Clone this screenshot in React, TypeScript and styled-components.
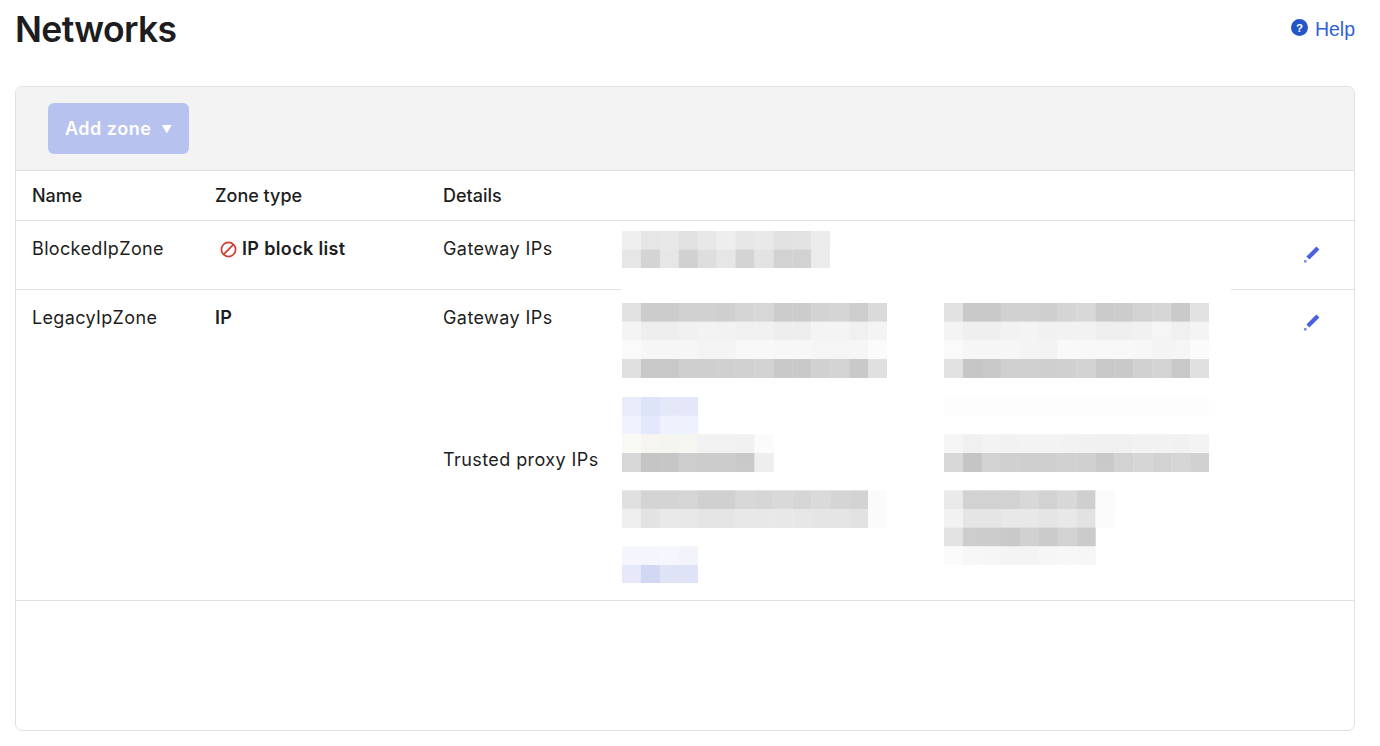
import React from "react";
import styled, { createGlobalStyle } from "styled-components";

const Global = createGlobalStyle`
  html, body { margin: 0; padding: 0; background: #fff; }
  body { font-family: Inter, "Liberation Sans", sans-serif; color: #1d1d21; }
`;

const Page = styled.div`
  width: 1380px;
  height: 746px;
  box-sizing: border-box;
  padding: 0 25px 0 15px;
  overflow: hidden;
`;

const TopBar = styled.header`
  display: flex;
  justify-content: space-between;
  align-items: center;
  height: 58px;
  margin-bottom: 28px;
`;

const Title = styled.h1`
  margin: 1px 0 0;
  font-size: 35.5px;
  line-height: 58px;
  font-weight: 600;
  letter-spacing: -0.62px;
  color: #1d1d21;
`;

const HelpLink = styled.a`
  display: flex;
  align-items: center;
  gap: 6.5px;
  font-size: 19.5px;
  color: #2f62d9;
  font-family: "Liberation Sans", Arial, sans-serif;
`;

const HelpIcon = styled.svg`
  display: block;
  margin-top: -4px;
`;

const Card = styled.section`
  box-sizing: border-box;
  height: 645px;
  border: 1px solid #e1e1e1;
  border-radius: 7px;
  overflow: hidden;
`;

const Toolbar = styled.div`
  box-sizing: border-box;
  height: 84px;
  padding: 16px 32px;
  background: #f3f3f3;
  border-bottom: 1px solid #e1e1e1;
`;

const AddButton = styled.button`
  display: flex;
  align-items: center;
  gap: 10px;
  box-sizing: border-box;
  width: 141px;
  height: 51px;
  padding: 0 0 0 17px;
  border: 0;
  border-radius: 6px;
  background: #b8c2ee;
  color: #fff;
  font-family: inherit;
  font-size: 18px;
  font-weight: 600;
  letter-spacing: 0.5px;
`;

const Caret = styled.span`
  margin-top: 3px;
  font-size: 10.5px;
  line-height: 1;
  letter-spacing: 0;
`;

const Row = styled.div<{ $height: number; $head?: boolean }>`
  position: relative;
  box-sizing: border-box;
  display: grid;
  grid-template-columns: 199px 228px 1fr 50px;
  height: ${(p) => p.$height}px;
  border-bottom: 1px solid #e1e1e1;
  font-size: 18px;
  line-height: 22px;
  font-weight: ${(p) => (p.$head ? 500 : 400)};
  letter-spacing: ${(p) => (p.$head ? 0 : 0.35)}px;
`;

const Veil = styled.div`
  position: absolute;
  left: 605px;
  top: -2px;
  width: 610px;
  height: 5px;
  background: #fff;
`;

const Cell = styled.div<{ $pad?: number; $strong?: boolean }>`
  padding-top: ${(p) => p.$pad ?? 17}px;
  padding-left: 0;
  font-weight: ${(p) => (p.$strong ? 600 : "inherit")};
`;

const NameCell = styled(Cell)`
  padding-left: 16px;
`;

const ZoneLabel = styled.span`
  display: flex;
  align-items: center;
  gap: 5px;
  margin-left: 5px;
`;

const Details = styled.div<{ $top: number }>`
  display: flex;
  flex-direction: column;
  gap: 19px;
  padding-top: ${(p) => p.$top}px;
`;

const DetailGroup = styled.div`
  display: grid;
  grid-template-columns: 179px 322px 265px;
  align-items: start;
`;

const GroupLabel = styled.div<{ $top: number }>`
  padding-top: ${(p) => p.$top}px;
  letter-spacing: 0.42px;
`;

const EditCell = styled.div<{ $top: number }>`
  padding-top: ${(p) => p.$top}px;
  margin-left: -1px;
`;

const MosaicSvg = styled.svg`
  display: block;
`;

const CELL_W = 18.93;
const CELL_H = 18.67;

const colour = (t: string) => (t.length === 2 ? `#${t}${t}${t}` : `#${t}`);

function Mosaic({ rows }: { rows: string[] }) {
  const cols = Math.max(...rows.map((r) => (r ? r.split(" ").length : 0)));
  const w = cols * CELL_W;
  const h = rows.length * CELL_H;
  return (
    <MosaicSvg width={w} height={h} viewBox={`0 0 ${w} ${h}`} aria-hidden="true">
      {rows.map((r, y) =>
        r
          ? r.split(" ").map((t, x) => (
              <rect key={`${x}-${y}`} x={x * CELL_W} y={y * CELL_H} width={CELL_W + 0.3} height={CELL_H + 0.3} fill={colour(t)} />
            ))
          : null
      )}
    </MosaicSvg>
  );
}

const blocked = [
  "ef e6 e8 e1 e8 ee e6 e9 e1 e3 ec",
  "e6 d4 e6 d1 de e6 d4 e3 d2 d2 eb",
];
const gatewayA = [
  "e1 cc cc d1 d1 cf d5 d7 cc cc d3 d5 cd da",
  "f4 ee ee f1 f3 f2 f0 f1 ee ee f4 f4 f0 f4",
  "fa f6 f6 f6 f4 f4 f8 f8 f7 f7 f5 f5 f6 fb",
  "e0 c8 c8 cf cf d0 d1 d3 c9 c9 d1 d4 c9 e0",
];
const gatewayB = [
  "e2 c9 c9 d1 d1 cf d5 d8 cb cc d2 d6 ca e2",
  "f4 ef ef f2 f4 f1 f2 f2 ef ef f1 f5 f0 f4",
  "fa f6 f6 f6 f4 f3 f9 f8 f8 f8 f7 f4 f5 fb",
  "e1 c6 c8 d0 d0 cf d0 d3 c8 c9 d1 d4 c8 e0",
];
const proxyA = [
  "e9ecfb dde3f9 e4e8f9 e4e7f8",
  "f0f3fe e4e8fc eff2fd eef1fe",
  "f9f9f6 f6f5f0 f5f5f0 f5f6f1 f2 f2 f1 fb",
  "d7 c5 c6 cd cc cc c9 ee",
  "",
  "e0 d4 d4 d6 d0 d0 d7 d6 d9 d6 da d5 d3 fb",
  "ef e3 e9 e8 e5 e5 e8 e8 e8 e7 e5 e5 e2 fb",
  "",
  "f5f6fd f5f6fd f6f7fd f3f4fb",
  "e5e9fa d2d8f4 dfe3f6 e0e3f7",
];
const proxyB = [
  "fd fd fd fd fd fd fd fd fd fd fd fd fd fd",
  "",
  "f5 f0 f3 f2 f3 f3 f2 f1 f0 f0 f2 f2 f1 f3",
  "d8 c5 d2 d0 cf cf d1 d0 c9 d2 d6 d2 d6 d1",
  "",
  "ea d2 d2 d2 d8 d2 d8 cf fa",
  "f2 e5 e5 e8 e8 e5 e8 e2 fb",
  "e3 cd cc c9 d1 cb d2 cb",
  "fb f7 f6 f4 f4 f6 f7 f6",
];

const Pencil = () => (
  <svg width="17" height="17" viewBox="0 0 17 17" aria-hidden="true" style={{ display: "block" }}>
    <path d="M13.4 0.6 16.4 3.6 6.4 13.6 3.4 10.6Z" fill="#4a60df" />
    <path d="M1 14h2.6v2.6H1z" fill="#7f90ea" />
  </svg>
);

const BanIcon = () => (
  <svg width="17" height="17" viewBox="0 0 17 17" aria-hidden="true" style={{ display: "block" }}>
    <circle cx="8.5" cy="8.5" r="7.1" fill="none" stroke="#cf3b2e" strokeWidth="1.7" />
    <path d="M13.6 3.4 3.4 13.6" stroke="#cf3b2e" strokeWidth="1.7" />
  </svg>
);

export default function App() {
  return (
    <>
      <Global />
      <Page>
        <TopBar>
          <Title>Networks</Title>
          <HelpLink>
            <HelpIcon width="17" height="17" viewBox="0 0 17 17" aria-hidden="true">
              <circle cx="8.5" cy="8.5" r="8.5" fill="#2456c8" />
              <text x="8.5" y="12.6" textAnchor="middle" fontSize="11.5" fontWeight="700" fill="#fff" fontFamily="Liberation Sans, sans-serif">?</text>
            </HelpIcon>
            Help
          </HelpLink>
        </TopBar>
        <Card>
          <Toolbar>
            <AddButton>
              Add zone <Caret>▼</Caret>
            </AddButton>
          </Toolbar>
          <Row $height={50} $head>
            <NameCell $pad={14}>Name</NameCell>
            <Cell $pad={14}>Zone type</Cell>
            <Cell $pad={14}>Details</Cell>
            <div />
          </Row>
          <Row $height={69}>
            <NameCell>BlockedIpZone</NameCell>
            <Cell $strong>
              <ZoneLabel>
                <BanIcon />
                IP block list
              </ZoneLabel>
            </Cell>
            <Details $top={10}>
              <DetailGroup>
                <GroupLabel $top={7}>Gateway IPs</GroupLabel>
                <Mosaic rows={blocked} />
              </DetailGroup>
            </Details>
            <EditCell $top={25}>
              <Pencil />
            </EditCell>
          </Row>
          <Row $height={311}>
            <Veil />
            <NameCell>LegacyIpZone</NameCell>
            <Cell $strong>IP</Cell>
            <Details $top={13}>
              <DetailGroup>
                <GroupLabel $top={4}>Gateway IPs</GroupLabel>
                <Mosaic rows={gatewayA} />
                <Mosaic rows={gatewayB} />
              </DetailGroup>
              <DetailGroup>
                <GroupLabel $top={52}>Trusted proxy IPs</GroupLabel>
                <Mosaic rows={proxyA} />
                <Mosaic rows={proxyB} />
              </DetailGroup>
            </Details>
            <EditCell $top={24}>
              <Pencil />
            </EditCell>
          </Row>
        </Card>
      </Page>
    </>
  );
}
